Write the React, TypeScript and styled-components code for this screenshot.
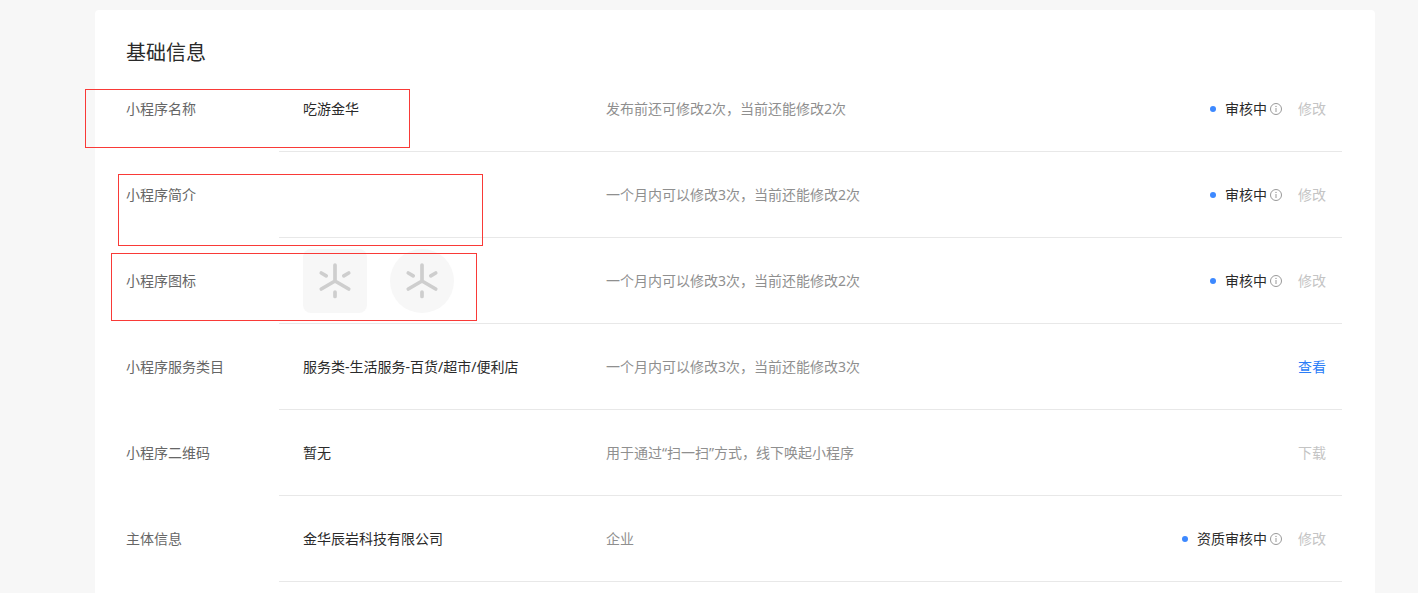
import React from "react";
import styled, { createGlobalStyle, css } from "styled-components";

const GlobalStyle = createGlobalStyle`
  *, *::before, *::after { box-sizing: border-box; }
  body {
    margin: 0;
    background: #f7f7f7;
    color: #2a2a2a;
    font: 14px/20px "Noto Sans", "Noto Sans CJK SC", sans-serif;
  }
`;

const Page = styled.main`
  display: flex;
  min-height: 100vh;
  padding: 10px 43px 0 95px;
`;

const Card = styled.section`
  flex: 1;
  min-width: 0;
  padding: 30px 33px 0 31px;
  background: #fff;
  border-radius: 4px 4px 0 0;
`;

const Title = styled.h2`
  margin: 0;
  font-size: 20px;
  line-height: 26px;
  font-weight: 400;
`;

const List = styled.dl`
  margin: 0;
`;

const Row = styled.div`
  position: relative;
  display: flex;
`;

const Label = styled.dt`
  display: flex;
  align-items: center;
  flex: 0 0 153px;
  color: #666;
`;

const Detail = styled.dd`
  flex: 1;
  display: grid;
  grid-template-columns: 303px 1fr auto auto;
  align-items: center;
  height: 86px;
  margin: 0;
  padding: 0 16px 0 24px;
  border-bottom: 1px solid #e8e8e8;
`;

const Value = styled.div`
  display: flex;
  gap: 23px;
`;

const Hint = styled.div`
  color: #8f8f8f;
`;

const Status = styled.div`
  display: flex;
  align-items: center;
  margin-right: 16px;
`;

const Dot = styled.span`
  width: 6px;
  height: 6px;
  margin-right: 9px;
  border-radius: 50%;
  background: #3d89ff;
`;

const InfoButton = styled.button`
  display: flex;
  margin-left: 3px;
  padding: 0;
  border: 0;
  background: none;
`;

const actionStyle = css`
  padding: 0;
  border: 0;
  background: none;
  font: inherit;
  text-decoration: none;
`;

const ActionButton = styled.button`
  ${actionStyle}
  color: #c4c4c4;
`;

const ActionLink = styled.a`
  ${actionStyle}
  color: #2b7df7;
`;

const Tile = styled.svg<{ $round?: boolean }>`
  display: block;
  width: 64px;
  height: 64px;
  border-radius: ${(p) => (p.$round ? "50%" : "8px")};
  background: #f7f7f7;
`;

interface MarkBox {
  left: number;
  top: number;
  width: number;
  height: number;
}

const Mark = styled.div<{ $box: MarkBox }>`
  position: absolute;
  left: ${(p) => p.$box.left}px;
  top: ${(p) => p.$box.top}px;
  width: ${(p) => p.$box.width}px;
  height: ${(p) => p.$box.height}px;
  border: 1px solid #f93a37;
  pointer-events: none;
`;

const AppIcon = ({ round }: { round?: boolean }) => (
  <Tile
    $round={round}
    viewBox="0 0 64 64"
    fill="none"
    stroke="#cecece"
    strokeWidth="3.7"
    strokeLinecap="round"
    strokeLinejoin="round"
    aria-hidden="true"
  >
    <path d="M32 16V32M18.3 40 32 32 45.7 40M18.3 24 23.2 26.8M45.7 24 40.8 26.8M32 43V47.5" />
  </Tile>
);

const InfoIcon = () => (
  <svg width="12" height="12" viewBox="0 0 12 12" fill="none" aria-hidden="true">
    <circle cx="6" cy="6" r="5.5" stroke="#999" />
    <path d="M6 5V9" stroke="#999" />
    <circle cx="6" cy="3.4" r="0.7" fill="#999" />
  </svg>
);

interface Item {
  label: string;
  value?: React.ReactNode;
  hint: string;
  status?: string;
  action: string;
  link?: boolean;
  mark?: MarkBox;
}

const items: Item[] = [
  {
    label: "小程序名称",
    value: "吃游金华",
    hint: "发布前还可修改2次，当前还能修改2次",
    status: "审核中",
    action: "修改",
    mark: { left: -41, top: 23, width: 325, height: 59 },
  },
  {
    label: "小程序简介",
    hint: "一个月内可以修改3次，当前还能修改2次",
    status: "审核中",
    action: "修改",
    mark: { left: -8, top: 22, width: 365, height: 72 },
  },
  {
    label: "小程序图标",
    value: (
      <>
        <AppIcon />
        <AppIcon round />
      </>
    ),
    hint: "一个月内可以修改3次，当前还能修改2次",
    status: "审核中",
    action: "修改",
    mark: { left: -15, top: 15, width: 366, height: 68 },
  },
  {
    label: "小程序服务类目",
    value: "服务类-生活服务-百货/超市/便利店",
    hint: "一个月内可以修改3次，当前还能修改3次",
    action: "查看",
    link: true,
  },
  {
    label: "小程序二维码",
    value: "暂无",
    hint: "用于通过“扫一扫”方式，线下唤起小程序",
    action: "下载",
  },
  {
    label: "主体信息",
    value: "金华辰岩科技有限公司",
    hint: "企业",
    status: "资质审核中",
    action: "修改",
  },
];

export default function App() {
  return (
    <>
      <GlobalStyle />
      <Page lang="zh-CN">
        <Card>
          <Title>基础信息</Title>
          <List>
            {items.map((item) => (
              <Row key={item.label}>
                <Label>{item.label}</Label>
                <Detail>
                  <Value>{item.value}</Value>
                  <Hint>{item.hint}</Hint>
                  <div>
                    {item.status && (
                      <Status>
                        <Dot />
                        {item.status}
                        <InfoButton type="button" aria-label="审核说明">
                          <InfoIcon />
                        </InfoButton>
                      </Status>
                    )}
                  </div>
                  {item.link ? (
                    <ActionLink href="#category">{item.action}</ActionLink>
                  ) : (
                    <ActionButton type="button" disabled>
                      {item.action}
                    </ActionButton>
                  )}
                </Detail>
                {item.mark && <Mark $box={item.mark} />}
              </Row>
            ))}
          </List>
        </Card>
      </Page>
    </>
  );
}
